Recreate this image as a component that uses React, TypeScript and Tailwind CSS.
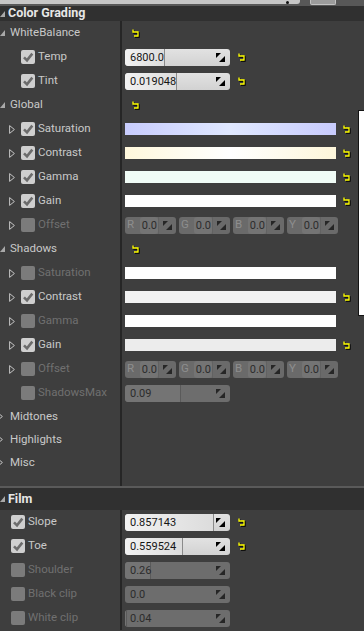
import React from "react";

type Kind = "group" | "sub" | "plain" | "film" | "collapsed" | "none";

const font = { fontFamily: "Roboto, 'Noto Sans', sans-serif" };

// 펼침 삼각형
function OpenTri() {
  return (
    <svg width="5" height="6" viewBox="0 0 5 6" className="shrink-0">
      <polygon points="5,0 5,6 0,6" fill="#a9a9a9" />
    </svg>
  );
}

function ClosedTri() {
  return (
    <svg width="6" height="9" viewBox="0 0 6 9" className="shrink-0">
      <polygon points="0.6,0.6 5.4,4.5 0.6,8.4" fill="none" stroke="#c4c4c4" strokeWidth="1" />
    </svg>
  );
}

function Check({ on, enabled }: { on: boolean; enabled: boolean }) {
  return (
    <div
      className={`w-[14px] h-[14px] rounded-[2px] shrink-0 flex items-center justify-center ${
        enabled ? "bg-[#cfcfcf]" : "bg-[#7b7b7b]"
      }`}
    >
      {on && (
        <svg width="14" height="14" viewBox="0 0 14 14">
          <path d="M3 7.3 L6 10.3 L11.3 3.6" fill="none" stroke="#6c6c6c" strokeWidth="2.6" />
        </svg>
      )}
    </div>
  );
}

function Reset() {
  return (
    <svg width="9" height="9" viewBox="0 0 9 9" className="shrink-0">
      <path d="M2 1.5 V4 H7 V8 H3" fill="none" stroke="#000" strokeWidth="1.3" />
      <path d="M1 0.5 V3 H6 V7 H2" fill="none" stroke="#ffff00" strokeWidth="1.3" />
    </svg>
  );
}

function Spin({ color }: { color: string }) {
  return (
    <svg width="9" height="9" viewBox="0 0 9 9" className="shrink-0">
      <polygon points="0,0 5,0 0,5" fill={color} />
      <polygon points="9,3 9,9 3,9" fill={color} />
    </svg>
  );
}

function NumField({ value, fill, enabled }: { value: string; fill: number; enabled: boolean }) {
  return (
    <div
      className={`relative w-[105px] h-[17px] rounded-[3px] flex items-center overflow-hidden ${
        enabled ? "bg-gradient-to-b from-[#e2e2e2] to-[#d2d2d2]" : "bg-[#6d6d6d]"
      }`}
    >
      {fill > 0 && (
        <div
          className={`absolute left-0 top-0 bottom-0 rounded-l-[3px] border-r ${
            enabled
              ? "bg-gradient-to-r from-[#f2f2f2] to-[#dcdcdc] border-[#8a8a8a]"
              : "bg-[#747474] border-[#5a5a5a]"
          }`}
          style={{ width: fill }}
        />
      )}
      <span
        className={`relative pl-[5px] text-[11px] leading-none ${enabled ? "text-[#151515]" : "text-[#2c2c2c]"}`}
      >
        {value}
      </span>
      <div className="relative ml-auto mr-[5px] flex items-center">
        <Spin color={enabled ? "#000" : "#262626"} />
      </div>
    </div>
  );
}

function VecField({ letter }: { letter: string }) {
  return (
    <div className="w-[51px] h-[17px] rounded-[3px] bg-[#6a6a6a] flex items-center">
      <span className="w-[15px] pl-[2px] text-[11.5px] leading-none text-[#8e8e8e]">{letter}</span>
      <span className="w-[18px] h-[17px] rounded-[3px] bg-[#747474] flex items-center justify-end pr-[1px] text-[11px] leading-none text-[#2c2c2c]">
        0.0
      </span>
      <div className="flex-1 h-[17px] border-l border-[#626262] flex items-center justify-center">
        <Spin color="#262626" />
      </div>
    </div>
  );
}

function ColorBar({ bg }: { bg: string }) {
  return <div className={`w-[211px] h-[12px] ${bg}`} />;
}

type RowProps = {
  kind: Kind;
  label?: string;
  on?: boolean;
  enabled?: boolean;
  h?: string;
  children?: React.ReactNode;
};

function Row({ kind, label = "", on = false, enabled = true, h = "h-[24px]", children }: RowProps) {
  const text = enabled ? "text-[#c9c9c9]" : "text-[#707070]";
  return (
    <div className={`flex ${h}`}>
      <div className="w-[120px] flex items-center overflow-hidden">
        {kind === "group" && (
          <>
            <OpenTri />
            <span className="ml-[5px] text-[11.5px] text-[#c9c9c9]">{label}</span>
          </>
        )}
        {kind === "collapsed" && (
          <>
            <div className="ml-[-3px]">
              <ClosedTri />
            </div>
            <span className="ml-[7px] text-[11.5px] text-[#c9c9c9]">{label}</span>
          </>
        )}
        {kind === "sub" && (
          <>
            <div className="w-[9px] shrink-0" />
            <ClosedTri />
            <div className="w-[6px] shrink-0" />
            <Check on={on} enabled={on} />
            <span className={`ml-[3px] text-[11.5px] ${text}`}>{label}</span>
          </>
        )}
        {kind === "plain" && (
          <>
            <div className="w-[21px] shrink-0" />
            <Check on={on} enabled={on} />
            <span className={`ml-[3px] text-[11.5px] ${text}`}>{label}</span>
          </>
        )}
        {kind === "film" && (
          <>
            <div className="w-[11px] shrink-0" />
            <Check on={on} enabled={on} />
            <span className={`ml-[3px] text-[11.5px] ${text}`}>{label}</span>
          </>
        )}
      </div>
      <div className="w-[2px] bg-[#262626]" />
      <div className="flex-1 flex items-center pl-[3px]">{children}</div>
    </div>
  );
}

function Header({ title, h }: { title: string; h: string }) {
  return (
    <div className={`${h} bg-[#303030] flex items-center`}>
      <OpenTri />
      <span className="ml-[3px] text-[12.5px] font-bold text-[#e6e6e6]">{title}</span>
    </div>
  );
}

export default function App() {
  return (
    <div className="relative w-[364px] h-[631px] overflow-hidden bg-[#3e3e3e] select-none" style={font}>
      {/* 상단 검색줄 잘린 부분 */}
      <div className="h-[6px] bg-[#585858] flex items-start">
        <div className="relative w-[300px] h-[4px] bg-[#c6c6c6] rounded-br-[3px]">
          <div className="absolute left-[286px] top-[1px] w-[3px] h-[3px] rounded-full bg-[#111]" />
        </div>
        <div className="ml-[10px] w-[26px] h-[5px] bg-[#9c9c9c] border-x border-b border-[#c2c2c2] rounded-b-[2px]" />
      </div>

      <Header title="Color Grading" h="h-[15px]" />

      <Row kind="group" label="WhiteBalance">
        <div className="ml-[7px]">
          <Reset />
        </div>
      </Row>
      <Row kind="plain" label="Temp" on>
        <NumField value="6800.0" fill={40} enabled />
        <div className="ml-[8px]">
          <Reset />
        </div>
      </Row>
      <Row kind="plain" label="Tint" on>
        <NumField value="0.019048" fill={52} enabled />
        <div className="ml-[8px]">
          <Reset />
        </div>
      </Row>

      <Row kind="group" label="Global">
        <div className="ml-[7px]">
          <Reset />
        </div>
      </Row>
      <Row kind="sub" label="Saturation" on>
        <ColorBar bg="bg-gradient-to-r from-[#c8ccfd] via-[#e0e8ff] to-[#c8cbfd]" />
        <div className="ml-[7px]">
          <Reset />
        </div>
      </Row>
      <Row kind="sub" label="Contrast" on>
        <ColorBar bg="bg-gradient-to-r from-[#fff8dc] via-[#ffffff] to-[#fdf6da]" />
        <div className="ml-[7px]">
          <Reset />
        </div>
      </Row>
      <Row kind="sub" label="Gamma" on>
        <ColorBar bg="bg-[#f0fcf6]" />
        <div className="ml-[7px]">
          <Reset />
        </div>
      </Row>
      <Row kind="sub" label="Gain" on>
        <ColorBar bg="bg-[#ffffff]" />
        <div className="ml-[7px]">
          <Reset />
        </div>
      </Row>
      <Row kind="sub" label="Offset" enabled={false}>
        <div className="flex gap-[3px]">
          <VecField letter="R" />
          <VecField letter="G" />
          <VecField letter="B" />
          <VecField letter="Y" />
        </div>
      </Row>

      <Row kind="group" label="Shadows">
        <div className="ml-[7px]">
          <Reset />
        </div>
      </Row>
      <Row kind="sub" label="Saturation" enabled={false}>
        <ColorBar bg="bg-[#ffffff]" />
      </Row>
      <Row kind="sub" label="Contrast" on>
        <ColorBar bg="bg-[#f2f2f2]" />
        <div className="ml-[7px]">
          <Reset />
        </div>
      </Row>
      <Row kind="sub" label="Gamma" enabled={false}>
        <ColorBar bg="bg-[#ffffff]" />
      </Row>
      <Row kind="sub" label="Gain" on>
        <ColorBar bg="bg-[#ececec]" />
        <div className="ml-[7px]">
          <Reset />
        </div>
      </Row>
      <Row kind="sub" label="Offset" enabled={false}>
        <div className="flex gap-[3px]">
          <VecField letter="R" />
          <VecField letter="G" />
          <VecField letter="B" />
          <VecField letter="Y" />
        </div>
      </Row>
      <Row kind="plain" label="ShadowsMax" enabled={false}>
        <NumField value="0.09" fill={56} enabled={false} />
      </Row>

      <Row kind="collapsed" label="Midtones" h="h-[23px]" />
      <Row kind="collapsed" label="Highlights" h="h-[23px]" />
      <Row kind="collapsed" label="Misc" h="h-[23px]" />
      <Row kind="none" h="h-[12px]" />

      <div className="h-[2px] bg-[#5a5a5a]" />
      <Header title="Film" h="h-[22px]" />

      <Row kind="film" label="Slope" on>
        <NumField value="0.857143" fill={89} enabled />
        <div className="ml-[8px]">
          <Reset />
        </div>
      </Row>
      <Row kind="film" label="Toe" on>
        <NumField value="0.559524" fill={58} enabled />
        <div className="ml-[8px]">
          <Reset />
        </div>
      </Row>
      <Row kind="film" label="Shoulder" enabled={false}>
        <NumField value="0.26" fill={26} enabled={false} />
      </Row>
      <Row kind="film" label="Black clip" enabled={false}>
        <NumField value="0.0" fill={0} enabled={false} />
      </Row>
      <Row kind="film" label="White clip" enabled={false}>
        <NumField value="0.04" fill={2} enabled={false} />
      </Row>

      {/* 오른쪽 가장자리 팝업 */}
      <div className="absolute left-[358px] top-[110px] w-[8px] h-[206px] bg-white border border-[#141414]" />
    </div>
  );
}
